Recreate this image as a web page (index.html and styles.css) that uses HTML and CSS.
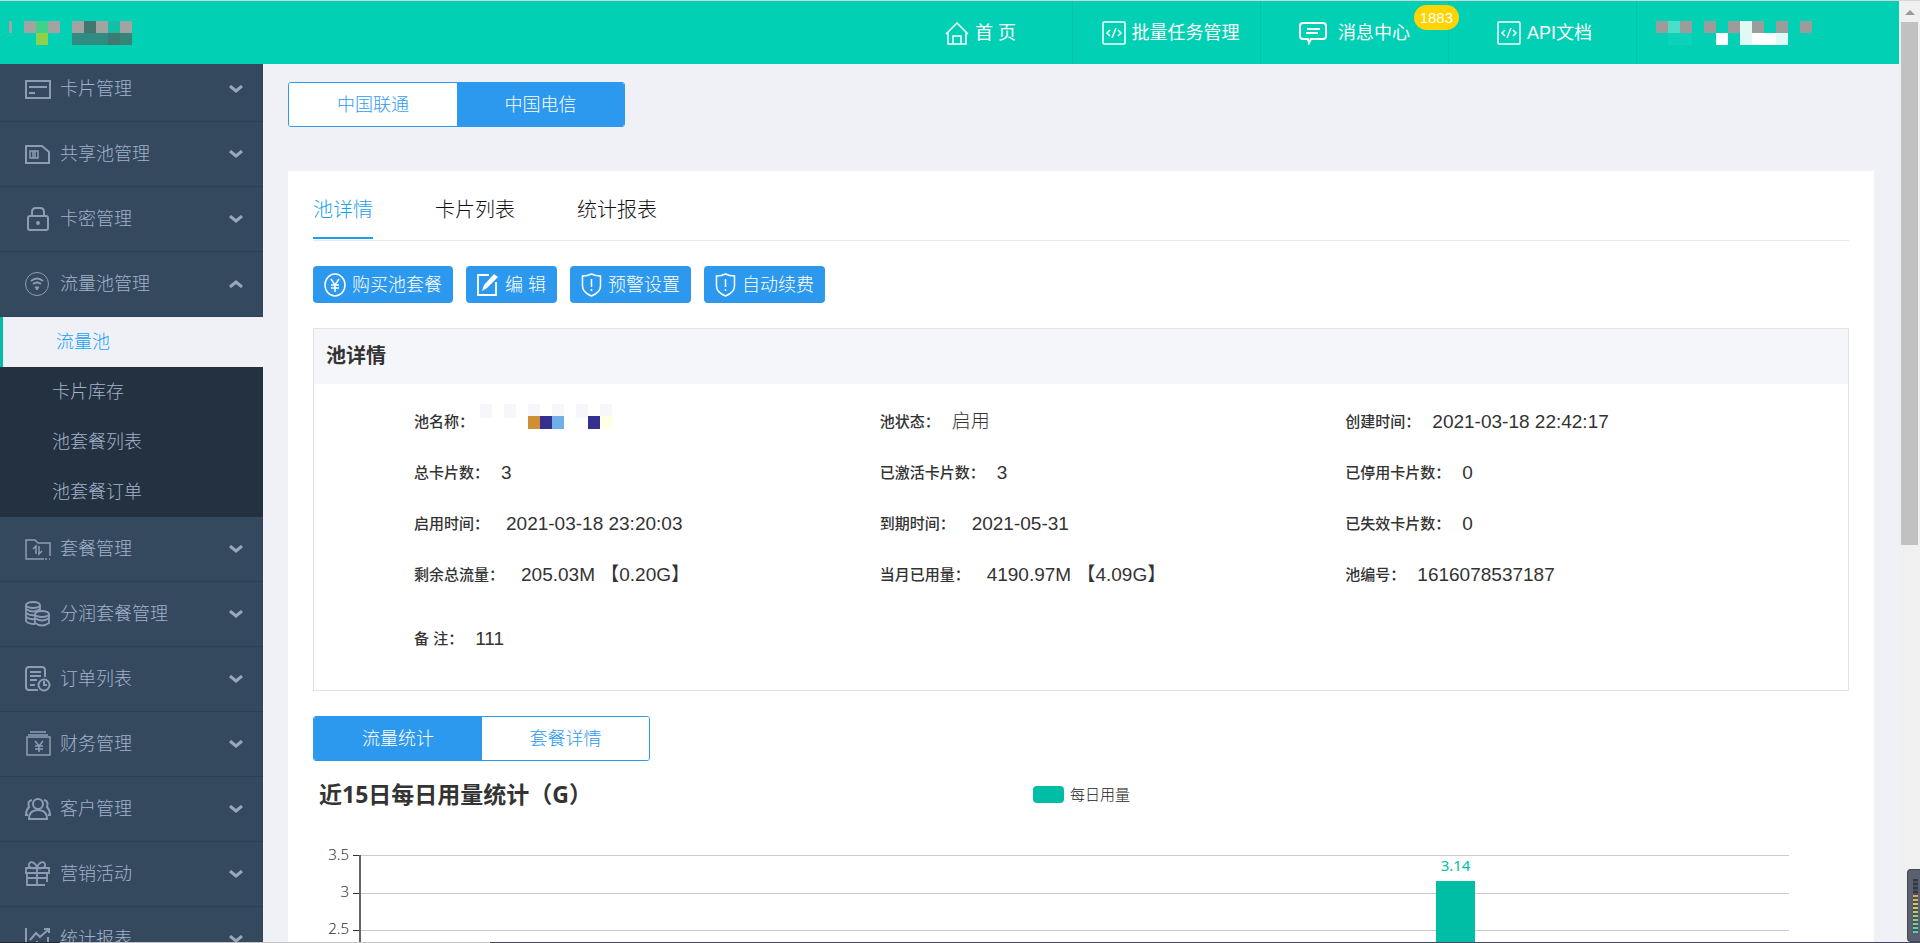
FILE: index.html
```html
<!DOCTYPE html>
<html lang="zh-CN">
<head>
<meta charset="utf-8">
<title>流量池 - 池详情</title>
<link rel="stylesheet" href="styles.css">
</head>
<body>
<svg class="sprite" aria-hidden="true">
  <symbol id="chevron" viewBox="0 0 14 8"><path d="M1 1l6 5 6-5" fill="none" stroke="currentColor" stroke-width="3"/></symbol>
  <symbol id="code" viewBox="0 0 24 24"><rect x="1" y="1" width="22" height="22" rx="1" stroke-width="1.500"/><path stroke-width="1.500" d="M8 9l-3 3 3 3M16 9l3 3-3 3M14 7l-4 10"/></symbol>
  <symbol id="shield" viewBox="0 0 20 24"><path stroke-width="1.500" d="M1 3c3 0 7-1 9-2 2 1 6 2 9 2v10c0 5-4 8-9 10-5-2-9-5-9-10z"/><path stroke-width="1.500" d="M10 6v8M10 16v2"/></symbol>
</svg>
<div class="app">
  <header class="header">
    <svg class="logo" viewBox="0 0 124 24" role="img" aria-label="logo">
      <path fill="#a3a3a3" d="M0 0h3v12H0zM15 0h12v12H15zM39 0h12v12H39zM63 0h12v12H63zM87 0h12v12H87zM111 0h12v12h-12z"/>
      <path fill="#40d18c" d="M27 0h12v12H27z"/><path fill="#90d14c" d="M27 12h12v12H27z"/>
      <path fill="#42766f" d="M75 0h12v12H75z"/><path fill="#14bfa9" d="M99 0h12v12H99z"/>
      <path fill="#308c80" d="M63 12h36v12H63z"/><path fill="#3e7972" d="M99 12h12v12H99z"/><path fill="#37847a" d="M111 12h12v12h-12z"/>
    </svg>
    <nav class="topnav">
      <a class="topnav-item" href="#"><svg class="icon" viewBox="0 0 24 24" width="24" height="24"><path stroke-width="1.500" d="M1 13L12 2l11 11M3 11v12h18V11M8 23v-8h8v8"/></svg>首 页</a>
      <a class="topnav-item code" href="#"><svg class="icon" width="24" height="24"><use href="#code"/></svg>批量任务管理</a>
      <a class="topnav-item wide" href="#"><svg class="icon thick" viewBox="0 0 28 24" width="28" height="24"><path d="M4 2h20q3 0 3 3v10q0 3-3 3H12l-2 4-1-4H4q-3 0-3-3V5q0-3 3-3zM8 8h13M7 12h12"/></svg>消息中心<span class="badge">1883</span></a>
      <a class="topnav-item" href="#"><svg class="icon" width="24" height="24"><use href="#code"/></svg>API文档</a>
      <a class="topnav-item user" href="#" aria-label="user"><svg viewBox="0 0 156 24" width="156" height="24">
        <path fill="#9c9c9c" d="M0 0h12v12H0zM24 0h12v12H24zM48 0h12v12H48zM72 0h12v12H72zM96 0h12v12H96zM120 0h12v12h-12zM144 0h12v12h-12z"/>
        <path fill="#4bdfca" d="M12 0h12v12H12z"/><path fill="#0bd2b8" d="M12 12h24v12H12z"/>
        <path fill="#e0f9f5" d="M84 0h12v24H84zM120 12h12v12h-12z"/><path fill="#fff" d="M60 12h12v12H60zM96 12h24v12H96z"/></svg></a>
    </nav>
  </header>
  <div class="body">
    <aside class="sidebar">
      <nav class="menu">
        <button class="menu-item"><svg class="icon" viewBox="0 0 26 26"><path d="M1 5h24v17H1zM4 11h18M4 17h6"/></svg><span>卡片管理</span><svg class="chev"><use href="#chevron"/></svg></button>
        <button class="menu-item"><svg class="icon" viewBox="0 0 26 26"><path d="M1 5h16l7 6v11H1z"/><path stroke-width="1.500" d="M5 10h8v7H5zM8 10v7M10 10v7"/></svg><span>共享池管理</span><svg class="chev"><use href="#chevron"/></svg></button>
        <button class="menu-item"><svg class="icon" viewBox="0 0 26 26"><rect x="3" y="10" width="20" height="14" rx="2"/><path d="M7 10V6q0-4 4-4h4q4 0 4 4v4"/><circle cx="13" cy="17" r="1"/></svg><span>卡密管理</span><svg class="chev"><use href="#chevron"/></svg></button>
        <button class="menu-item open"><svg class="icon thin" viewBox="0 0 26 26"><circle cx="12" cy="13" r="11.500"/><path stroke-width="2" d="M6 10q6-5 12 0M8 13q4-3 8 0"/><path d="M10 16h4l-2 3z" fill="currentColor"/></svg><span>流量池管理</span><svg class="chev"><use href="#chevron"/></svg></button>
        <div class="submenu">
          <a class="active" href="#">流量池</a>
          <a href="#">卡片库存</a>
          <a href="#">池套餐列表</a>
          <a href="#">池套餐订单</a>
        </div>
        <button class="menu-item"><svg class="icon" viewBox="0 0 26 26"><path stroke-width="1.500" d="M19 23H1V4h9l3 3h12v13M20 23h2M24 23h1M8 13l3-3v8M14 10v8l3-3"/></svg><span>套餐管理</span><svg class="chev"><use href="#chevron"/></svg></button>
        <button class="menu-item"><svg class="icon" viewBox="0 0 26 26"><g stroke-width="1.800"><ellipse cx="8" cy="4" rx="7" ry="3"/><path d="M1 4v16q2 3 9 3M15 4v7M1 8q7 5 14 0M1 12q4 3 9 2M1 16q4 3 9 2"/><ellipse cx="17" cy="13" rx="7" ry="3"/><path d="M10 13v9q7 5 14 0v-9M10 17q7 5 14 0"/></g></svg><span>分润套餐管理</span><svg class="chev"><use href="#chevron"/></svg></button>
        <button class="menu-item"><svg class="icon" viewBox="0 0 26 26"><path d="M13 24H4q-3 0-3-3V4q0-3 3-3h13q3 0 3 3v7M5 6h11M5 10h11M5 14h7M5 19h5"/><circle cx="19" cy="19" r="5.500"/><path d="M19 15v4h3"/></svg><span>订单列表</span><svg class="chev"><use href="#chevron"/></svg></button>
        <button class="menu-item"><svg class="icon" viewBox="0 0 26 26"><path stroke-width="1.500" d="M5 1h16M3 4h20M2 6h23v18H2zM10 10l4 5 4-5M10 15h8M10 18h8M14 15v6"/></svg><span>财务管理</span><svg class="chev"><use href="#chevron"/></svg></button>
        <button class="menu-item"><svg class="icon" viewBox="0 0 26 26"><circle cx="13" cy="8" r="5"/><path d="M4 23q0-9 9-9t9 9zM7 4q-5 1-3 7-3 3-3 8h2M19 4q5 1 3 7 3 3 3 8h-2"/></svg><span>客户管理</span><svg class="chev"><use href="#chevron"/></svg></button>
        <button class="menu-item"><svg class="icon" viewBox="0 0 26 26"><path stroke-width="1.800" d="M1 7h23v5H1zM2 12v12h18M22 12v9M12 7v17M2 17h20M12 7C6 8 3 6 4 3c2-4 7-1 8 4 1-5 6-8 8-4 1 3-2 5-8 4"/></svg><span>营销活动</span><svg class="chev"><use href="#chevron"/></svg></button>
        <button class="menu-item"><svg class="icon" viewBox="0 0 26 26"><path d="M1 2v22h24M5 14l6-7 4 4 9-8M19 3h5v4M7 18v4M12 15v7M17 16v6M23 11v11"/></svg><span>统计报表</span><svg class="chev"><use href="#chevron"/></svg></button>
      </nav>
    </aside>
    <main class="main">
      <div class="segment">
        <button>中国联通</button><button class="on">中国电信</button>
      </div>
      <section class="card">
        <nav class="tabs">
          <a class="active" href="#">池详情</a><a href="#">卡片列表</a><a href="#">统计报表</a>
        </nav>
        <div class="actions">
          <button><svg class="icon" viewBox="0 0 22 24" width="22" height="24"><g stroke-width="1.500"><ellipse cx="11" cy="12" rx="10" ry="11"/><path d="M7 6l4 6 4-6M7 12h8M7 15h8M11 12v7"/></g></svg>购买池套餐</button>
          <button><svg class="icon" viewBox="0 0 22 24" width="22" height="24"><path stroke-width="1.800" d="M12 2H1v20h18V9"/><path d="M5 18l2-6L17 1l4 3L10 15z" fill="currentColor" stroke="none"/></svg>编 辑</button>
          <button><svg class="icon" width="21" height="24"><use href="#shield"/></svg>预警设置</button>
          <button><svg class="icon" width="21" height="24"><use href="#shield"/></svg>自动续费</button>
        </div>
        <section class="panel">
          <h2>池详情</h2>
          <dl class="details">
            <div class="tight"><dt>池名称：</dt><dd><svg class="redacted" viewBox="0 0 134 28" width="134" height="28">
              <path fill="#f6f6fb" d="M0 0h12v14H0zM24 0h12v14H24zM48 0h12v14H48zM72 0h12v14H72zM96 0h12v14H96zM120 0h12v14h-12z"/>
              <path fill="#cf9035" d="M48 12h12v13H48z"/><path fill="#33308f" d="M60 12h12v13H60zM108 12h12v13h-12z"/><path fill="#6fb0ea" d="M72 12h12v13H72z"/><path fill="#ffffe6" d="M120 12h12v13h-12z"/></svg></dd></div>
            <div><dt>池状态：</dt><dd>启用</dd></div>
            <div><dt>创建时间：</dt><dd>2021-03-18 22:42:17</dd></div>
            <div><dt>总卡片数：</dt><dd>3</dd></div>
            <div><dt>已激活卡片数：</dt><dd>3</dd></div>
            <div><dt>已停用卡片数：</dt><dd>0</dd></div>
            <div class="loose"><dt>启用时间：</dt><dd>2021-03-18 23:20:03</dd></div>
            <div class="loose"><dt>到期时间：</dt><dd>2021-05-31</dd></div>
            <div><dt>已失效卡片数：</dt><dd>0</dd></div>
            <div class="loose"><dt>剩余总流量：</dt><dd>205.03M 【0.20G】</dd></div>
            <div class="loose"><dt>当月已用量：</dt><dd>4190.97M 【4.09G】</dd></div>
            <div><dt>池编号：</dt><dd>1616078537187</dd></div>
            <div class="remark"><dt>备 注：</dt><dd>111</dd></div>
          </dl>
        </section>
        <div class="segment">
          <button class="on">流量统计</button><button>套餐详情</button>
        </div>
        <div class="chart">
          <div class="chart-head">
            <h3>近15日每日用量统计（G）</h3>
            <span class="legend"><i></i>每日用量</span>
          </div>
          <div class="plot-row">
            <div class="y-axis"><span>3.5</span><span>3</span><span>2.5</span></div>
            <div class="plot">
              <div class="lines"><i></i><i></i><i></i><i></i><i></i><i></i><i></i></div>
              <div class="bars"><div class="bar" style="height:90%"><span>3.14</span></div></div>
            </div>
          </div>
        </div>
      </section>
    </main>
  </div>
</div>
<div class="scrollbar"><svg width="10" height="5" viewBox="0 0 10 5"><path d="M0 5l5-5 5 5z" fill="#9b9b9b"/></svg><div class="thumb"></div></div>
<div class="meter"><i></i></div>
<div class="edge"></div>
</body>
</html>
```

FILE: styles.css
```css
* { box-sizing: border-box; }
body {
  margin: 0;
  height: 100vh;
  display: flex;
  overflow: hidden;
  border-top: 1px solid #d3d5d8;
  background: #f0f1f7;
  color: #333;
  font: 300 18px/24px "Liberation Sans", "Noto Sans CJK SC", sans-serif;
}
button { font: inherit; border: 0; cursor: pointer; }
a { color: inherit; text-decoration: none; }
h2, h3, dl, dd { margin: 0; }
.sprite { position: absolute; width: 0; height: 0; }
.icon { flex: none; fill: none; stroke: currentColor; stroke-width: 2; }
.icon.thin { stroke-width: 1; }

.app { flex: 1; min-width: 0; display: flex; flex-direction: column; }
.header {
  flex: none;
  height: 63px;
  display: flex;
  justify-content: space-between;
  align-items: center;
  background: #02d0b5;
  color: #fff;
}
.logo { width: 124px; height: 24px; margin-left: 9px; }
.topnav { display: flex; height: 100%; font-weight: 400; }
.topnav-item {
  position: relative;
  width: 188px;
  display: flex;
  align-items: center;
  justify-content: center;
  gap: 6px;
  padding-left: 4px;
  border-right: 1px solid #02c2a9;
}
.topnav-item .icon { stroke-width: 1; }
.topnav-item .icon.thick { stroke-width: 2; }
.topnav-item.wide { gap: 11px; padding-left: 0; }
.topnav-item.code { padding-left: 8px; }
.topnav-item.user { width: 262px; justify-content: flex-start; padding-left: 19px; border: 0; }
.badge {
  position: absolute;
  top: 4px;
  right: -11px;
  padding: 0 6px;
  border-radius: 13px;
  background: #ffd400;
  font-size: 15px;
  line-height: 25px;
}

.body { flex: 1; min-height: 0; display: flex; }
.sidebar { flex: none; width: 263px; overflow: hidden; background: #34495e; color: #a3b1cb; }
.menu { margin-top: -7px; }
.menu-item {
  width: 100%;
  height: 65px;
  padding: 0 20px 0 25px;
  display: flex;
  align-items: center;
  gap: 9px;
  border-bottom: 1px solid #2c4156;
  background: none;
  color: inherit;
}
.menu-item .icon { width: 26px; height: 26px; opacity: 0.8; }
.menu-item span { flex: 1; text-align: left; }
.chev { width: 14px; height: 8px; opacity: 0.9; }
.open .chev { transform: rotate(180deg); }
.submenu { background: #233140; }
.submenu a { display: block; height: 50px; padding-left: 52px; line-height: 50px; }
.submenu .active { padding-left: 53px; border-left: 3px solid #03bca4; background: #f0f1f7; color: #1aa1f2; }

.main { flex: 1; min-width: 0; padding: 18px 25px 0; overflow: hidden; }
.segment { display: flex; width: max-content; border: 1px solid #2d99ee; border-radius: 3px; background: #fff; overflow: hidden; }
.segment button { width: 168px; height: 43px; background: #fff; color: #2d99ee; }
.segment button + button { width: 167px; }
.segment .on, .segment button.on { background: #2d99ee; color: #fff; }
.card { margin-top: 44px; padding: 14px 25px 0; background: #fff; }
.tabs { display: flex; gap: 62px; border-bottom: 1px solid #e9e9e9; font-size: 20px; color: #111; }
.tabs a { height: 54px; margin-bottom: 1px; line-height: 50px; }
.tabs .active { border-bottom: 2px solid #1e9fee; color: #1e9fee; }
.actions { display: flex; gap: 13px; margin: 25px 0; }
.actions button {
  display: flex;
  align-items: center;
  gap: 6px;
  height: 37px;
  padding: 0 11px;
  border-radius: 4px;
  background: #2d99ee;
  color: #fff;
}
.panel { margin-bottom: 25px; border: 1px solid #e3e3e3; }
.panel h2 { padding: 0 12px; background: #f5f6fa; font-size: 20px; line-height: 55px; font-weight: 700; }
.details {
  display: grid;
  grid-template-columns: repeat(3, 1fr);
  grid-auto-rows: 51px;
  padding: 12px 37px 39px 100px;
}
.details div { display: flex; align-items: center; gap: 12px; white-space: pre; }
.details .tight { gap: 6px; }
.details .loose { gap: 17px; }
.details .remark { grid-column: 1 / -1; height: 78px; }
dt { font-size: 15px; font-weight: 500; }
dd { font-size: 19px; }
.redacted { display: block; margin-bottom: 8px; }

.chart { padding-top: 18px; font-family: "Noto Sans", "Noto Sans CJK SC", sans-serif; }
.chart-head { display: grid; grid-template-columns: 1fr 1fr; align-items: center; }
.chart h3 { padding-left: 6px; font-size: 23px; line-height: 30px; font-weight: 700; }
.legend { display: flex; align-items: center; gap: 6px; margin-left: -48px; font-size: 15px; color: #222; }
.legend i { width: 31px; height: 17px; border-radius: 4px; background: #00bea6; }
.plot-row { display: flex; height: 263px; margin: 46px 60px 0 0; }
.y-axis {
  width: 36px;
  height: 111px;
  margin-top: -13px;
  display: flex;
  flex-direction: column;
  font-size: 15px;
  text-align: right;
}
.y-axis span { flex: 1; }
.plot { position: relative; flex: 1; margin-left: 4px; padding-left: 6px; }
.lines { height: 100%; display: flex; flex-direction: column; border-left: 2px solid #666; }
.lines i { flex: 1; border-top: 1px solid #ccc; position: relative; }
.lines i::before { content: ""; position: absolute; top: -1px; left: -8px; width: 6px; border-top: 1px solid #333; }
.bars {
  position: absolute;
  inset: 0 0 0 7px;
  display: grid;
  grid-template-columns: repeat(15, 1fr);
  align-items: end;
  justify-items: center;
}
.bar { grid-column: 12; width: 41%; background: #00bea6; display: flex; justify-content: center; }
.bar span { margin-top: -28px; font-size: 15px; font-weight: 400; color: #00bea6; }

.scrollbar {
  flex: none;
  width: 21px;
  padding: 0 2px;
  display: flex;
  flex-direction: column;
  align-items: center;
  background: #f0f0f0;
}
.scrollbar svg { margin: 9px 0 7px; }
.thumb { width: 100%; height: 55.5%; background: #c1c1c1; }
.meter {
  position: absolute;
  right: 0;
  bottom: 1px;
  width: 13px;
  height: 73px;
  padding: 9px 2px 8px 5px;
  border: 1px solid #434752;
  border-right: 0;
  border-radius: 4px 0 0 4px;
  background: #59606f;
}
.meter i {
  display: block;
  height: 100%;
  background:
    repeating-linear-gradient(transparent 0 2px, #4a4f5c 2px 4px),
    linear-gradient(#333742 0 25%, #e3a34f 28%, #d5cf52 50%, #8fd27c 75%, #4dd0b4);
}
.edge {
  position: absolute;
  left: 0;
  right: 0;
  bottom: 0;
  height: 1px;
  background: linear-gradient(90deg, #222a36 0 60px, #c4c4c4 60px 490px, #44485a 490px);
}
```
